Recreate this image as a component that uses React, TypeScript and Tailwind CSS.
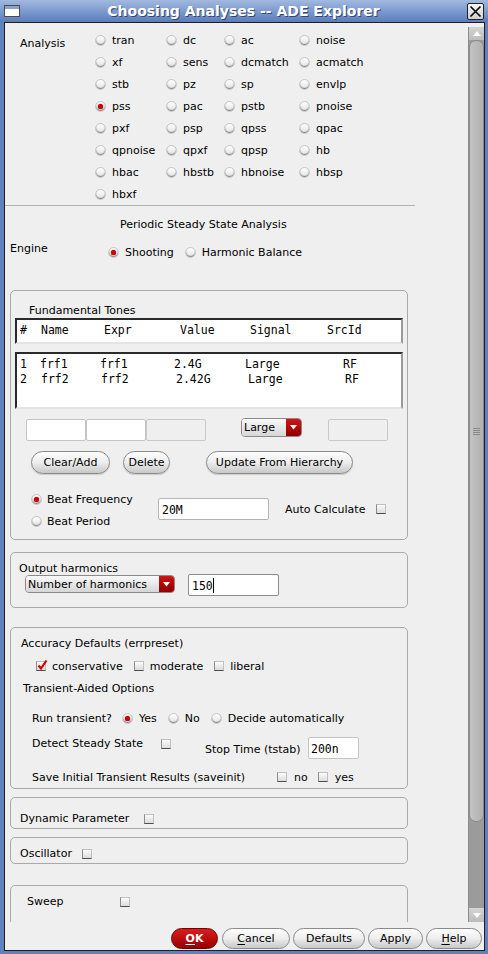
import React from 'react';

const Radio = ({ on }: { on?: boolean }) => (
  <span className="flex h-[11px] w-[11px] shrink-0 items-center justify-center rounded-full border border-[#c6c6c6] bg-gradient-to-b from-[#ffffff] to-[#e2e2e2] shadow-[inset_0_-1px_1px_rgba(0,0,0,0.45)]">
    {on && <span className="h-[5px] w-[5px] rounded-full bg-[#d40000] shadow-[0_0_1px_#6a0000]" />}
  </span>
);

const Check = ({ on }: { on?: boolean }) => (
  <span className="relative block h-[10px] w-[10px] shrink-0 border border-[#c0c0c0] border-b-[#4e4e4e] border-l-[#8c8c8c] bg-gradient-to-b from-[#fbfbfb] to-[#dcdcdc]">
    {on && (
      <svg className="absolute -top-[3px] left-0" width="11" height="12" viewBox="0 0 11 12">
        <path d="M1.5 6.5 L4 9.5 L9.5 1.5" fill="none" stroke="#d00000" strokeWidth="2.2" />
      </svg>
    )}
  </span>
);

const RadioItem = ({ on, label }: { on?: boolean; label: string }) => (
  <span className="flex items-center gap-[6px]">
    <Radio on={on} />
    <span className="pt-px">{label}</span>
  </span>
);

const Pill = ({ w, children }: { w: string; children: React.ReactNode }) => (
  <div
    className={`${w} flex h-[23px] items-center justify-center rounded-full border border-[#8a8a8a] bg-gradient-to-b from-[#fdfdfd] via-[#ededed] to-[#c8c8c8] pt-px shadow-[0_1px_1px_rgba(0,0,0,0.15)]`}
  >
    {children}
  </div>
);

const Drop = ({ w, label }: { w: string; label: string }) => (
  <div className={`${w} flex h-full overflow-hidden rounded-[4px] border border-[#8a8a8a]`}>
    <div className="flex flex-1 items-center bg-gradient-to-b from-[#fafafa] to-[#d6d6d6] pl-[2px] pt-px">{label}</div>
    <div className="flex w-[15px] items-center justify-center bg-gradient-to-b from-[#d41414] to-[#8e0000]">
      <svg width="7" height="5" viewBox="0 0 7 5">
        <path d="M0 0 H7 L3.5 4.5 Z" fill="#ffffff" />
      </svg>
    </div>
  </div>
);

const mono = "font-['DejaVu_Sans_Mono','Liberation_Mono',monospace] text-[11.5px]";

const grid = [
  ['tran', 'dc', 'ac', 'noise'],
  ['xf', 'sens', 'dcmatch', 'acmatch'],
  ['stb', 'pz', 'sp', 'envlp'],
  ['pss', 'pac', 'pstb', 'pnoise'],
  ['pxf', 'psp', 'qpss', 'qpac'],
  ['qpnoise', 'qpxf', 'qpsp', 'hb'],
  ['hbac', 'hbstb', 'hbnoise', 'hbsp'],
  ['hbxf'],
];

const greyBtn =
  'flex h-[21px] items-center justify-center rounded-full border border-[#8a8a8a] bg-gradient-to-b from-[#fdfdfd] via-[#ededed] to-[#c8c8c8] pt-px';

const ChoosingAnalyses: React.FC = () => {
  return (
    <div className="flex h-[954px] w-[488px] flex-col bg-[#5f81bd] pb-[3px] pl-[4px] pr-[3px] font-['DejaVu_Sans','Noto_Sans',sans-serif] text-[11px] leading-[14px] text-black">
      {/* title bar */}
      <div className="-ml-[4px] -mr-[3px] flex h-[22px] items-center bg-gradient-to-b from-[#a2b9df] via-[#7d9bcf] to-[#5b7db9]">
        <div className="ml-[4px] h-[12px] w-[16px] border border-[#4c4c4c] bg-white">
          <div className="h-[3px] bg-[#8aa2cc]" />
        </div>
        <div className="flex-1 text-center text-[14px] font-bold leading-[17px] text-white [text-shadow:1px_1px_0_#36486e]">
          Choosing Analyses -- ADE Explorer
        </div>
        <div className="mr-[4px] flex h-[17px] w-[17px] items-center justify-center rounded-[2px] border border-[#222] bg-gradient-to-b from-[#f6f6f6] to-[#cfcfcf]">
          <svg width="13" height="13" viewBox="0 0 13 13">
            <path d="M1.5 1.5 L11.5 11.5 M11.5 1.5 L1.5 11.5" stroke="#000" strokeWidth="1.6" />
          </svg>
        </div>
      </div>

      <div className="flex flex-1 flex-col border border-[#1e1e1e] bg-[#efefef]">
        <div className="flex h-[899px]">
          {/* scroll content */}
          <div className="h-[899px] w-[463px] overflow-hidden">
            <div className="flex pl-[15px] pt-[6px]">
              <div className="w-[75px] pt-[8px]">Analysis</div>
              <div className="grid grid-cols-[71px_58px_75px_80px]">
                {grid.map((row, i) =>
                  row.map((a) => (
                    <div key={i + a} className="flex h-[22px] items-center pt-px">
                      <RadioItem on={a === 'pss'} label={a} />
                    </div>
                  ))
                )}
              </div>
            </div>
            <div className="h-px w-[410px] bg-[#b3b3b3]" />

            <div className="mt-[12px] pl-[115px]">Periodic Steady State Analysis</div>
            <div className="mt-[10px] flex pl-[5px]">
              <div className="w-[98px]">Engine</div>
              <div className="mt-[3px] flex items-center">
                <RadioItem on label="Shooting" />
                <span className="ml-[11px]">
                  <RadioItem label="Harmonic Balance" />
                </span>
              </div>
            </div>

            {/* Fundamental tones */}
            <div className="ml-[5px] mt-[30px] h-[250px] w-[398px] rounded-[5px] border border-[#a9a9a9]">
              <div className="pl-[18px] pt-[13px]">Fundamental Tones</div>
              <div className={`ml-[4px] h-[26px] w-[388px] border-2 border-b-[#e4e4e4] border-l-[#2a2a2a] border-r-[#9a9a9a] border-t-[#2a2a2a] bg-white ${mono}`}>
                <div className="flex pl-[3px] pt-[3px] leading-[14px]">
                  <span className="w-[21px]">#</span>
                  <span className="w-[63px]">Name</span>
                  <span className="w-[76px]">Expr</span>
                  <span className="w-[70px]">Value</span>
                  <span className="w-[77px]">Signal</span>
                  <span>SrcId</span>
                </div>
              </div>
              <div className={`ml-[4px] mt-[8px] h-[57px] w-[388px] border-2 border-b-[#e4e4e4] border-l-[#2a2a2a] border-r-[#9a9a9a] border-t-[#2a2a2a] bg-white pt-[3px] ${mono} leading-[15px]`}>
                <div className="flex pl-[3px]">
                  <span className="w-[20px]">1</span>
                  <span className="w-[60px]">frf1</span>
                  <span className="w-[74px]">frf1</span>
                  <span className="w-[71px]">2.4G</span>
                  <span className="w-[98px]">Large</span>
                  <span>RF</span>
                </div>
                <div className="flex pl-[3px]">
                  <span className="w-[21px]">2</span>
                  <span className="w-[60px]">frf2</span>
                  <span className="w-[75px]">frf2</span>
                  <span className="w-[72px]">2.42G</span>
                  <span className="w-[97px]">Large</span>
                  <span>RF</span>
                </div>
              </div>

              <div className="mt-[9px] flex h-[23px] items-start pl-[15px]">
                <div className="mt-[1px] h-[22px] w-[60px] rounded-[2px] border border-[#c4c4c4] bg-white" />
                <div className="mt-[1px] h-[22px] w-[60px] rounded-[2px] border border-[#c4c4c4] bg-white" />
                <div className="mt-[1px] h-[22px] w-[60px] rounded-[2px] border border-[#c8c8c8] bg-[#efefef]" />
                <div className="ml-[35px] h-[19px]">
                  <Drop w="w-[61px]" label="Large" />
                </div>
                <div className="ml-[26px] mt-[1px] h-[22px] w-[60px] rounded-[2px] border border-[#c8c8c8] bg-[#efefef]" />
              </div>

              <div className="mt-[10px] flex pl-[20px]">
                <Pill w="w-[79px]">Clear/Add</Pill>
                <span className="ml-[13px]">
                  <Pill w="w-[47px]">Delete</Pill>
                </span>
                <span className="ml-[36px]">
                  <Pill w="w-[147px]">Update From Hierarchy</Pill>
                </span>
              </div>

              <div className="mt-[14px] flex items-start pl-[20px]">
                <div className="w-[127px]">
                  <div className="flex h-[22px] items-center gap-[5px]">
                    <Radio on />
                    <span className="pt-px">Beat Frequency</span>
                  </div>
                  <div className="flex h-[23px] items-center gap-[5px]">
                    <Radio />
                    <span className="pt-px">Beat Period</span>
                  </div>
                </div>
                <div className={`mt-[10px] flex h-[22px] w-[111px] items-center rounded-[2px] border border-[#b4b4b4] bg-white pl-[3px] pt-px ${mono}`}>20M</div>
                <div className="ml-[16px] mt-[15px]">Auto Calculate</div>
                <div className="ml-[11px] mt-[16px]">
                  <Check />
                </div>
              </div>
            </div>

            {/* Output harmonics */}
            <div className="ml-[5px] mt-[12px] h-[56px] w-[398px] rounded-[5px] border border-[#a9a9a9]">
              <div className="pl-[8px] pt-[9px] leading-[13px]">Output harmonics</div>
              <div className="-mt-px flex items-start pl-[14px]">
                <div className="mt-[1px] h-[18px]">
                  <Drop w="w-[150px]" label="Number of harmonics" />
                </div>
                <div className={`ml-[13px] flex h-[22px] w-[91px] items-center rounded-[2px] border border-[#8c8c8c] bg-white pl-[3px] pt-px ${mono}`}>
                  150<span className="h-[15px] w-px bg-black" />
                </div>
              </div>
            </div>

            {/* Accuracy */}
            <div className="ml-[5px] mt-[19px] h-[162px] w-[398px] rounded-[5px] border border-[#a9a9a9]">
              <div className="pl-[10px] pt-[9px]">Accuracy Defaults (errpreset)</div>
              <div className="mt-[8px] flex h-[14px] items-center pl-[25px]">
                <Check on />
                <span className="ml-[6px] pt-px">conservative</span>
                <span className="ml-[11px]">
                  <Check />
                </span>
                <span className="ml-[6px] pt-px">moderate</span>
                <span className="ml-[11px]">
                  <Check />
                </span>
                <span className="ml-[6px] pt-px">liberal</span>
              </div>
              <div className="mt-[9px] pl-[12px]">Transient-Aided Options</div>
              <div className="mt-[15px] flex h-[14px] items-center pl-[21px]">
                <span className="w-[90px] pt-px">Run transient?</span>
                <RadioItem on label="Yes" />
                <span className="ml-[11px]">
                  <RadioItem label="No" />
                </span>
                <span className="ml-[11px]">
                  <RadioItem label="Decide automatically" />
                </span>
              </div>
              <div className="mt-[11px] flex items-start pl-[21px]">
                <span className="w-[129px] pt-px">Detect Steady State</span>
                <span className="mt-[3px]">
                  <Check />
                </span>
                <span className="ml-[34px] mt-[7px] w-[103px]">Stop Time (tstab)</span>
                <div className={`mt-[1px] flex h-[22px] w-[51px] items-center rounded-[2px] border border-[#c4c4c4] bg-white pl-[2px] pt-px ${mono}`}>200n</div>
              </div>
              <div className="mt-[11px] flex h-[14px] items-center pl-[21px]">
                <span className="w-[245px] pt-px">Save Initial Transient Results (saveinit)</span>
                <Check />
                <span className="ml-[7px] pt-px">no</span>
                <span className="ml-[10px]">
                  <Check />
                </span>
                <span className="ml-[7px] pt-px">yes</span>
              </div>
            </div>

            <div className="ml-[5px] mt-[8px] h-[32px] w-[398px] rounded-[5px] border border-[#a9a9a9]">
              <div className="flex items-center pl-[9px] pt-[13px]">
                <span className="w-[124px] pt-px">Dynamic Parameter</span>
                <Check />
              </div>
            </div>

            <div className="ml-[5px] mt-[8px] h-[27px] w-[398px] rounded-[5px] border border-[#a9a9a9]">
              <div className="flex items-center pl-[9px] pt-[8px]">
                <span className="w-[62px] pt-px">Oscillator</span>
                <Check />
              </div>
            </div>

            <div className="ml-[5px] mt-[21px] h-[80px] w-[398px] rounded-[5px] border border-[#a9a9a9]">
              <div className="flex items-center pl-[16px] pt-[8px]">
                <span className="w-[93px] pt-px">Sweep</span>
                <Check />
              </div>
              <div className="mt-[13px] flex pl-[294px]">
                <div className="h-[20px] w-[12px] bg-white" />
                <div className="ml-[29px] h-[20px] w-[12px] bg-white" />
              </div>
            </div>
          </div>

          {/* scrollbar */}
          <div className="flex w-[16px] flex-col pt-[4px]">
            <div className="flex h-[13px] items-center justify-center border-l border-[#8c8c8c] bg-gradient-to-b from-[#d4d4d4] to-[#bcbcbc]">
              <svg width="8" height="5" viewBox="0 0 8 5">
                <path d="M0 5 H8 L4 0 Z" fill="#ffffff" />
              </svg>
            </div>
            <div className="flex flex-1 flex-col border-l border-[#8c8c8c] bg-[#9b9b9b]">
              <div className="flex h-[782px] items-center justify-center rounded-[7px] border border-[#8a8a8a] bg-gradient-to-r from-[#c4c4c4] to-[#b0b0b0]">
                <div className="flex w-[7px] flex-col gap-[1px]">
                  <div className="h-px bg-[#8a8a8a]" />
                  <div className="h-px bg-[#8a8a8a]" />
                  <div className="h-px bg-[#8a8a8a]" />
                  <div className="h-px bg-[#8a8a8a]" />
                </div>
              </div>
            </div>
            <div className="flex h-[14px] items-center justify-center border-l border-[#8c8c8c] bg-gradient-to-b from-[#d4d4d4] to-[#bcbcbc]">
              <svg width="8" height="5" viewBox="0 0 8 5">
                <path d="M0 0 H8 L4 5 Z" fill="#ffffff" />
              </svg>
            </div>
          </div>
        </div>

        {/* bottom buttons */}
        <div className="flex justify-end gap-[3px] pr-[2px] pt-[6px]">
          <div className="mr-[1px] flex h-[21px] w-[47px] items-center justify-center rounded-full border border-[#6a0000] bg-gradient-to-b from-[#dd1c1c] to-[#980000] pt-px font-bold text-white">
            <span className="underline underline-offset-2">O</span>K
          </div>
          <div className={`${greyBtn} w-[68px]`}>
            <span className="underline underline-offset-2">C</span>ancel
          </div>
          <div className={`${greyBtn} w-[72px]`}>Defaults</div>
          <div className={`${greyBtn} w-[55px]`}>Apply</div>
          <div className={`${greyBtn} w-[56px]`}>
            <span className="underline underline-offset-2">H</span>elp
          </div>
        </div>
      </div>
    </div>
  );
};

export default function App() {
  return <ChoosingAnalyses />;
}
